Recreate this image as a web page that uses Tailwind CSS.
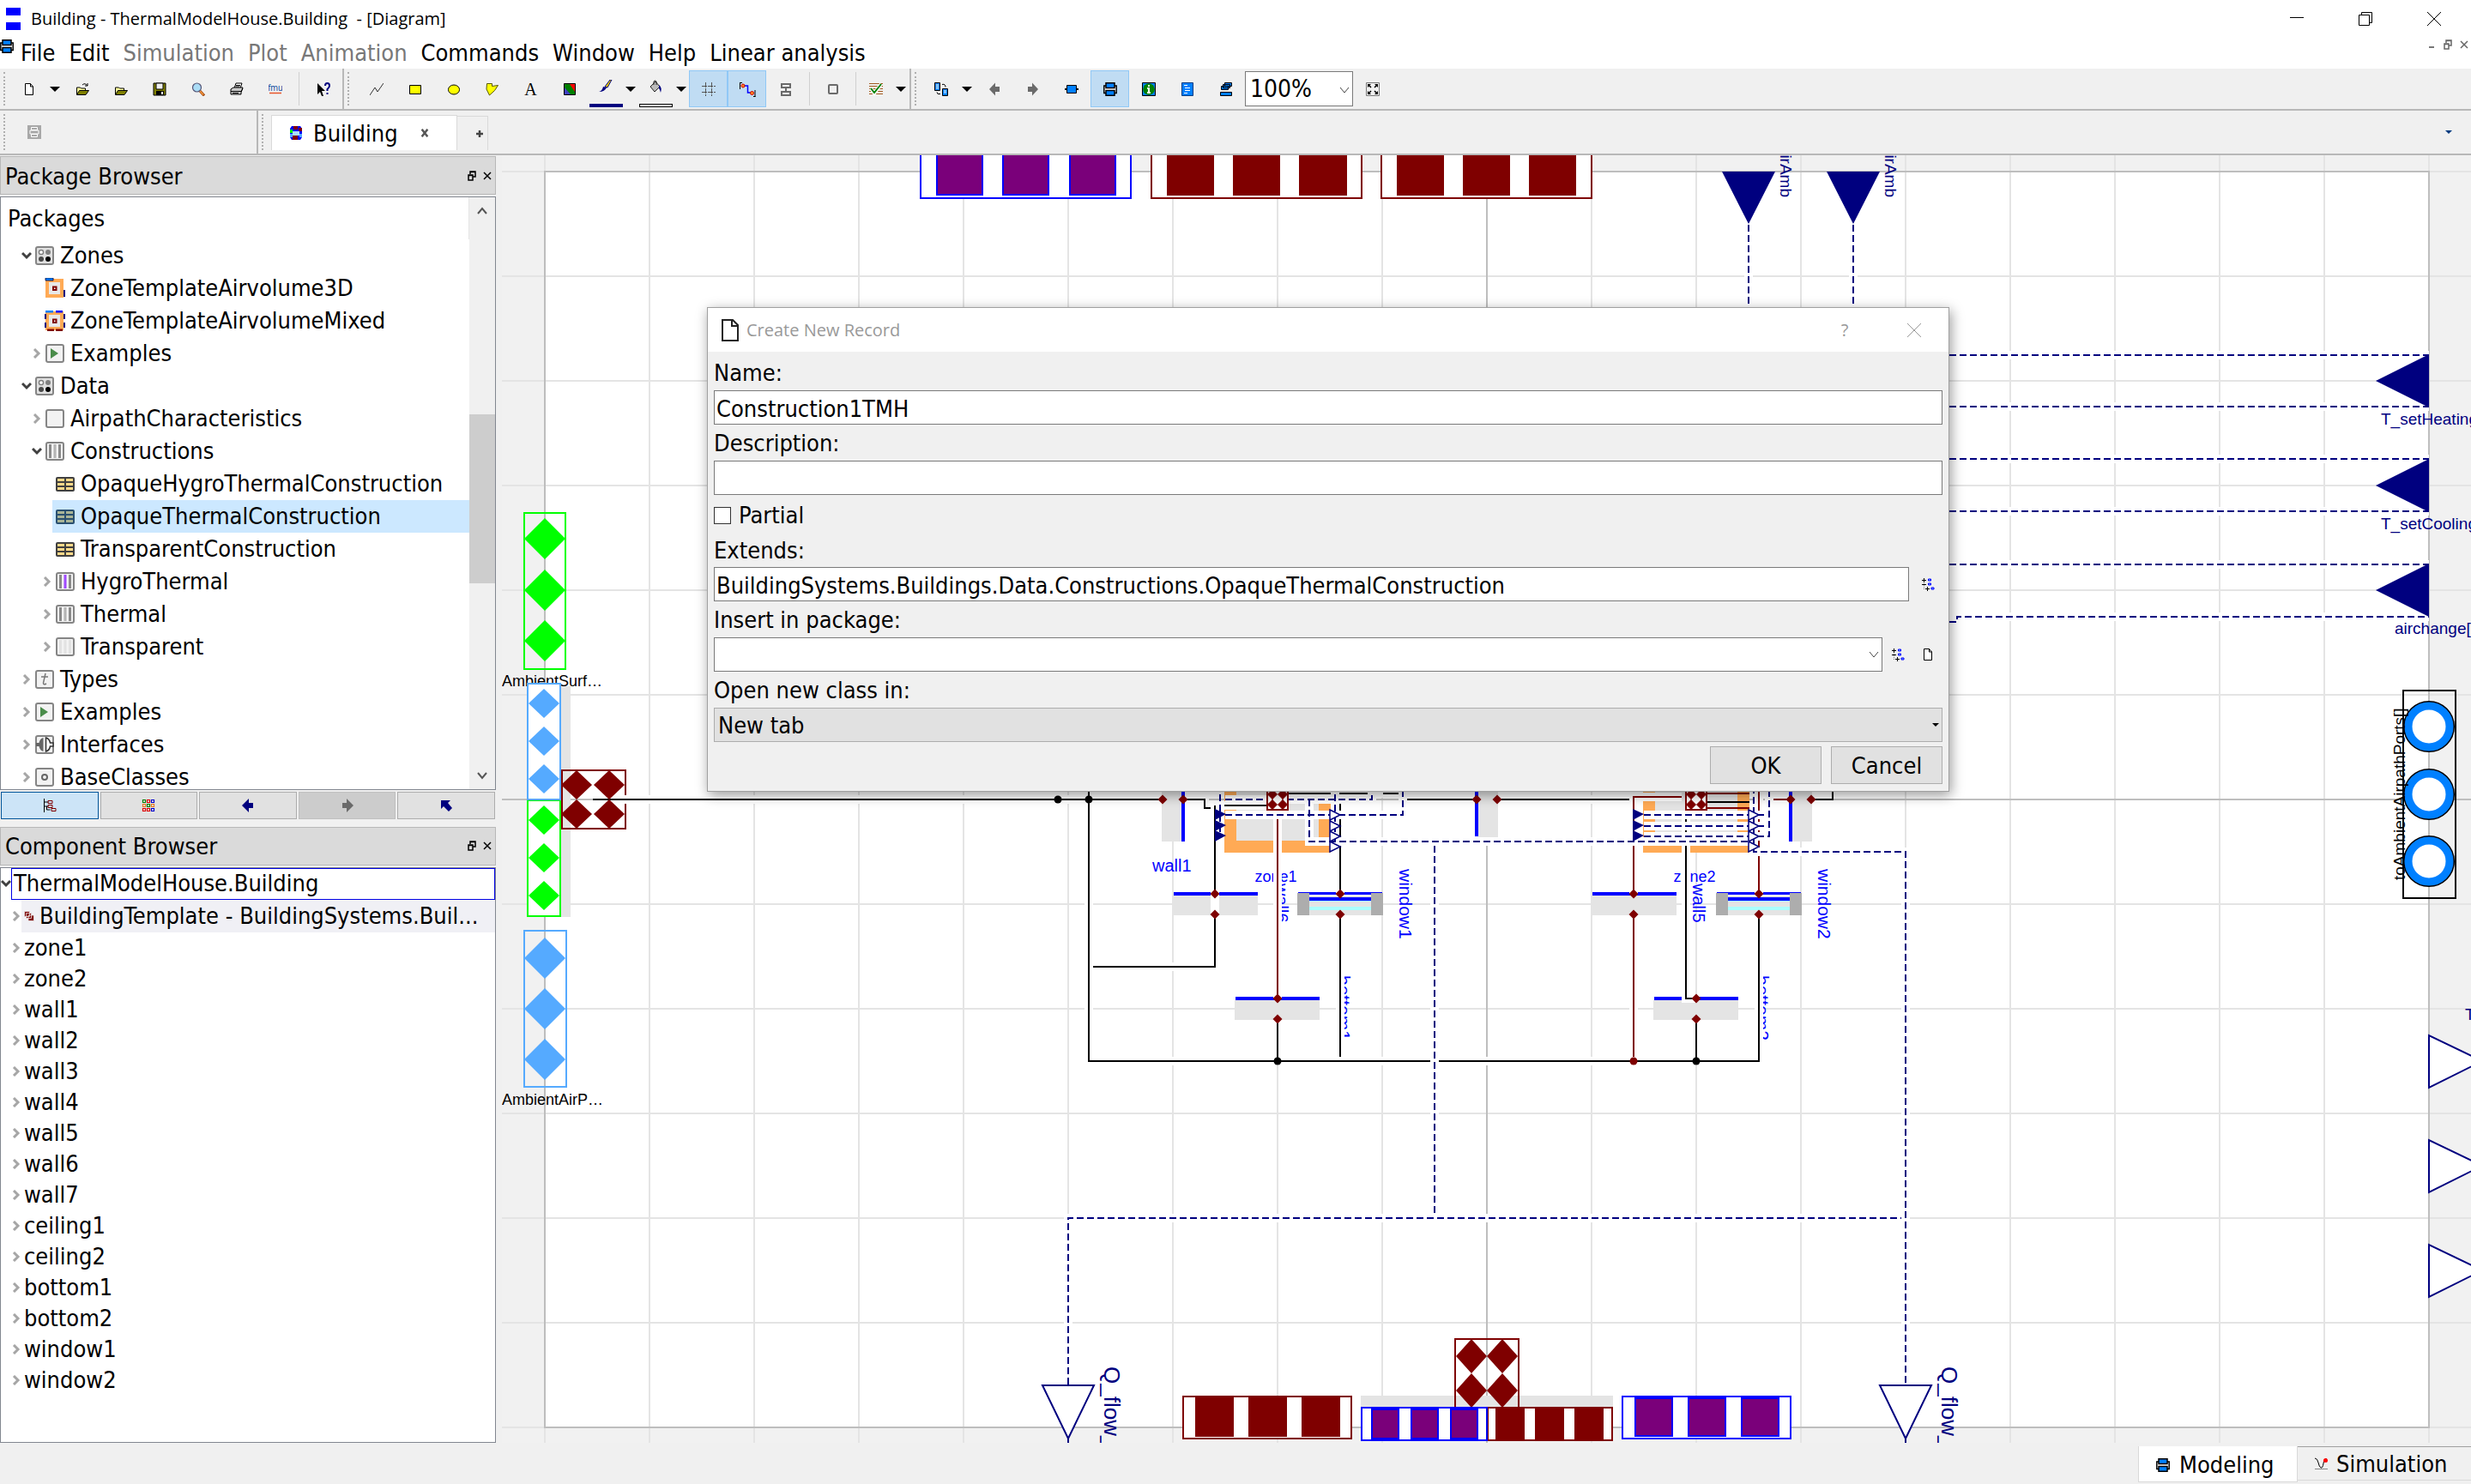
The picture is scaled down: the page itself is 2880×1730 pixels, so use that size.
<!DOCTYPE html>
<html lang="en">
<head>
<meta charset="utf-8">
<title>Building - ThermalModelHouse.Building - [Diagram]</title>
<script src="https://cdn.jsdelivr.net/npm/@tailwindcss/browser@4"></script>
</head>
<body class="bg-[#f0f0f0] text-black">
<svg class="hidden" aria-hidden="true">
  <symbol id="i-down" viewBox="0 0 12 12"><path d="M1 3l5 5 5-5" fill="none" stroke="#404040" stroke-width="3"/></symbol>
  <symbol id="i-right" viewBox="0 0 12 12"><path d="M3 1l5 5-5 5" fill="none" stroke="#a6a6a6" stroke-width="3"/></symbol>
  <symbol id="i-tri" viewBox="0 0 12 12"><path d="M0 3h12l-6 6z"/></symbol>
  <symbol id="i-page" viewBox="0 0 16 16"><path d="M3.500 1.500h6l3 3.500v9.500h-9z" fill="#fff" stroke="#000"/><path d="M9.500 1.500v3.500h3" fill="none" stroke="#000"/></symbol>
  <symbol id="i-diag" viewBox="0 0 16 16"><path d="M.8 4h14.400v8.500H.8z" fill="#fff" stroke="#000" stroke-width="1.500"/><path d="M3 .8h10v5.700H3zM3 9.500h10v5.700H3z" fill="#0080ff" stroke="#000" stroke-width="1.500"/></symbol>
  <symbol id="i-float" viewBox="0 0 10 12"><path d="M3 4V1h6v6H6M2.500 1.500h7M1 5h5v6H1zM1 5.500h5" fill="none" stroke="#000" stroke-width="1.500"/></symbol>
  <symbol id="i-x" viewBox="0 0 10 12"><path d="M1 2l8 8M9 2l-8 8" stroke="#000" stroke-width="1.500"/></symbol>
  <symbol id="i-treesel" viewBox="0 0 16 16"><path d="M3.500 1v14" stroke="#888" stroke-dasharray="1 1"/><path d="M1 3.500h5M3.500 1v5M1 8.500h5M5 13.500h5M7.500 11v5" stroke="#000"/><path d="M8.500 2h3v2h-3zM8.500 7h3v2h-3zM12 12h3v2h-3z" fill="#80b0ff" stroke="#00f"/></symbol>
  <symbol id="i-pack" viewBox="0 0 22 22"><rect x="1" y="1" width="20" height="20" rx="2" fill="#e0e0e0" stroke="#858585" stroke-width="2"/><circle cx="7" cy="7" r="2.600" fill="#fff" stroke="#808080" stroke-width="1.500"/><circle cx="15" cy="7" r="3" fill="#808080"/><circle cx="7" cy="15" r="3" fill="#4a4a4a"/><circle cx="15" cy="15" r="3" fill="#000"/></symbol>
  <symbol id="i-box" viewBox="0 0 22 22"><rect x="1" y="1" width="20" height="20" rx="2" fill="#f2f2f2" stroke="#858585" stroke-width="2"/></symbol>
  <symbol id="i-play" viewBox="0 0 22 22"><use href="#i-box"/><path d="M6 5l9 6-9 6z" fill="#4a8c4a"/></symbol>
  <symbol id="i-cons" viewBox="0 0 22 22"><use href="#i-box"/><path d="M4 3h3v16H4zM15 3h3v16h-3z" fill="#8a8a8a"/><path d="M9.500 3h3v16h-3z" fill="#b4b4b4"/></symbol>
  <symbol id="i-hygro" viewBox="0 0 22 22"><use href="#i-box"/><path d="M4 3h3v16H4zM15 3h3v16h-3z" fill="#8a8a8a"/><path d="M9.500 3h3v16h-3z" fill="#a04aff"/></symbol>
  <symbol id="i-transp" viewBox="0 0 22 22"><use href="#i-box"/><path d="M4 3h3v16H4zM9.500 3h3v16h-3zM15 3h3v16h-3z" fill="#e2e2e2"/></symbol>
  <symbol id="i-type" viewBox="0 0 22 22"><use href="#i-box"/><path d="M12 4l-2.500 11q0 3 3.500 1M7 8h8" fill="none" stroke="#777" stroke-width="1.500"/></symbol>
  <symbol id="i-base" viewBox="0 0 22 22"><use href="#i-box"/><circle cx="11" cy="11" r="3" fill="none" stroke="#666" stroke-width="2"/></symbol>
  <symbol id="i-iface" viewBox="0 0 22 22"><use href="#i-box"/><path d="M9.500 3v16q-4-1-5-6H1v-4h3.500q1-5 5-6z" fill="#666"/><path d="M12.500 3v16q4-1 5-6H21v-4h-3.500q-1-5-5-6z" fill="#fff" stroke="#333" stroke-width="1.500"/></symbol>
  <symbol id="i-z3d" viewBox="0 0 24 24"><path d="M3 3h17v18H3z" fill="#e8e8e8" stroke="#ffaa55" stroke-width="4"/><path d="M1 0h9v3H1z" fill="#0080ff" stroke="#003" stroke-width=".8"/><path d="M22 14h2v8h-2z" fill="#00007f"/><path d="M10 10.500h3.500v3.500H10z" fill="#fff" stroke="#7f0000" stroke-width="2"/></symbol>
  <symbol id="i-zmix" viewBox="0 0 24 24"><path d="M3 3h17v18H3z" fill="#e8e8e8" stroke="#ffaa55" stroke-width="4"/><path d="M1 0h9v2.500H1z" fill="#0080ff"/><path d="M13 0h8v2.500h-8z" fill="#00f"/><path d="M0 4h2v6H0zM0 14h2v6H0zM22 4h2v6h-2zM22 14h2v6h-2z" fill="#00007f"/><path d="M3 21.500h8V24H3zM13 21.500h8V24h-8z" fill="#7f0000"/><path d="M10 10.500h3.500v3.500H10z" fill="#fff" stroke="#7f0000" stroke-width="2"/></symbol>
  <symbol id="i-rec" viewBox="0 0 22 22"><rect y="3" width="22" height="17" rx="2" fill="#404040"/><path d="M2 5h8v3H2zM12 5h8v3h-8zM2 10h8v3H2zM12 10h8v3h-8zM2 15h8v3H2zM12 15h8v3h-8z" fill="#ffd98a"/></symbol>
  <symbol id="i-recsel" viewBox="0 0 22 22"><rect y="3" width="22" height="17" rx="2" fill="#2a5070"/><path d="M2 5h8v3H2zM12 5h8v3h-8zM2 10h8v3H2zM12 10h8v3h-8zM2 15h8v3H2zM12 15h8v3h-8z" fill="#a8b496"/></symbol>
  <symbol id="i-folder" viewBox="0 0 16 16"><path d="M1.500 14V6h4l1 1h5v2.500" fill="#ffff9c" stroke="#000"/><path d="M1.500 14.500l3-5h11l-3.500 5z" fill="#808000" stroke="#000"/></symbol>
</svg>

<div class="flex h-screen flex-col overflow-hidden font-['DejaVu_Sans_Condensed','DejaVu_Sans',sans-serif] text-[27px] leading-[36px]">

  <!-- Title bar -->
  <header class="flex h-[44px] shrink-0 items-center bg-white pl-[7px] font-['Open_Sans',sans-serif] text-[20px]">
    <svg class="h-[26px] w-[17px]" viewBox="0 0 17 26"><path d="M0 0h17v9H0zM0 17h17v9H0z" fill="#00f"/></svg>
    <h1 class="ml-3 flex-1 whitespace-pre">Building - ThermalModelHouse.Building  - [Diagram]</h1>
    <div class="flex">
      <button class="flex w-[80px] justify-center" aria-label="Minimize"><svg class="size-4" viewBox="0 0 16 16"><path d="M0 6.500h16" stroke="#000"/></svg></button>
      <button class="flex w-[80px] justify-center" aria-label="Restore"><svg class="size-4" viewBox="0 0 16 16"><path d="M.5 3.500h12v12H.5zM3.500 3V.5h12v12H13" fill="none" stroke="#000"/></svg></button>
      <button class="flex w-[80px] justify-center" aria-label="Close"><svg class="size-4" viewBox="0 0 16 16"><path d="M0 0l16 16M16 0L0 16" stroke="#000"/></svg></button>
      <span class="w-[3px]"></span>
    </div>
  </header>

  <!-- Menu bar -->
  <nav class="flex h-[36px] shrink-0 bg-white">
    <svg class="mt-0.5 h-4 w-4"><use href="#i-diag"/></svg>
    <div class="ml-[8px] flex flex-1 gap-4">
      <button>File</button><button>Edit</button><button class="text-[#787878]" disabled>Simulation</button><button class="text-[#787878]" disabled>Plot</button><button class="text-[#787878]" disabled>Animation</button><button>Commands</button><button>Window</button><button>Help</button><button>Linear analysis</button>
    </div>
    <div class="flex items-start gap-[9px] pt-0.5 pr-[3px]">
      <button class="flex" aria-label="Minimize document"><svg class="h-3 w-2.5" viewBox="0 0 10 12"><path d="M2 9h6" stroke="#777" stroke-width="2"/></svg></button>
      <button class="flex" aria-label="Restore document"><svg class="h-3 w-2.5 opacity-60"><use href="#i-float"/></svg></button>
      <button class="flex" aria-label="Close document"><svg class="h-3 w-2.5 opacity-60"><use href="#i-x"/></svg></button>
    </div>
  </nav>

  <!-- Tool bars -->
  <div class="flex h-[49px] shrink-0 items-stretch border-b-2 border-[#b8b8b8]">
    <span class="ml-1 my-1 w-0 border-l-2 border-dotted border-[#b0b0b0]"></span>
    <span class="w-2"></span>
    <button class="flex w-[40px] items-center justify-center" aria-label="New"><svg class="size-4"><use href="#i-page"/></svg></button>
    <button class="flex w-[19px] items-center justify-center" aria-label="New options"><svg class="size-3"><use href="#i-tri"/></svg></button>
    <button class="flex w-[45px] items-center justify-center" aria-label="Open"><svg class="size-4 overflow-visible" viewBox="0 0 16 16"><use href="#i-folder" width="16" height="16"/><path d="M8 3q3-3 6 1M14 1v3h-3" fill="none" stroke="#000"/></svg></button>
    <button class="flex w-[45px] items-center justify-center" aria-label="Load"><svg class="size-4"><use href="#i-folder"/></svg></button>
    <button class="flex w-[45px] items-center justify-center" aria-label="Save"><svg class="size-4" viewBox="0 0 16 16"><path d="M1 1h14v14H1z" fill="#808000" stroke="#000"/><path d="M4 1h8v7H4z" fill="#f0f0f0" stroke="#000"/><path d="M4 10h9v5H4z"/><path d="M10 11h2v3h-2z" fill="#fff"/></svg></button>
    <button class="flex w-[45px] items-center justify-center" aria-label="Find"><svg class="size-4" viewBox="0 0 16 16"><path d="M10 10l5 5.500" stroke="#a04a10" stroke-width="3"/><path d="M10 10l4 4.500" stroke="#ff9c40" stroke-width="1.300"/><circle cx="6.500" cy="6" r="5" fill="#aadcf5" stroke="#557" stroke-width="1.200"/></svg></button>
    <button class="flex w-[45px] items-center justify-center" aria-label="Print"><svg class="size-4" viewBox="0 0 16 16"><path d="M5 7L7 1h7l-2 6z" fill="#fff" stroke="#000"/><path d="M1 8l3-2h11l-2 6v2H1z" fill="#c8c8c8" stroke="#000"/><path d="M1 10.500h12l2-3M3 12.500h7M7 3.500h5M6.500 5h5" fill="none" stroke="#000"/></svg></button>
    <button class="flex w-[45px] items-center justify-center" aria-label="Import FMU"><svg class="size-4" viewBox="0 0 16 16"><text x="8" y="10" text-anchor="middle" font-size="10" fill="#0a4a9c">fmu</text><path d="M1 12.500h14" stroke="#e8552a" stroke-width="1.500"/></svg></button>
    <span class="mx-[5px] my-1 w-px bg-[#d0d0d0]"></span>
    <button class="flex w-[45px] items-center justify-center" aria-label="What's this"><svg class="size-4" viewBox="0 0 16 16"><path d="M1 1v13l3-3 2 5h2L6 10h4z"/><path d="M10 4q0-3 2.500-3T15 4q0 2-2.500 4v2M12.500 12v2" fill="none" stroke="#00007f" stroke-width="2"/></svg></button>
    <span class="w-0.5 bg-[#b8b8b8]"></span>
    <span class="ml-1 my-1 w-0 border-l-2 border-dotted border-[#b0b0b0]"></span>
    <span class="w-[9px]"></span>
    <button class="flex w-[45px] items-center justify-center" aria-label="Line"><svg class="size-4" viewBox="0 0 16 16"><path d="M0 15l6-9 3 5 7-10" fill="none" stroke="#333"/></svg></button>
    <button class="flex w-[45px] items-center justify-center" aria-label="Rectangle"><svg class="size-4" viewBox="0 0 16 16"><path d="M1.500 3.500h13v10h-13z" fill="#ff0" stroke="#000"/></svg></button>
    <button class="flex w-[45px] items-center justify-center" aria-label="Ellipse"><svg class="size-4" viewBox="0 0 16 16"><ellipse cx="8" cy="8.500" rx="6.500" ry="5.500" fill="#ff0" stroke="#000"/></svg></button>
    <button class="flex w-[45px] items-center justify-center" aria-label="Polygon"><svg class="size-4" viewBox="0 0 16 16"><path d="M1.500 1.500h6v3l7-1-4 6-6 5.500-3.500-7z" fill="#ff0" stroke="#555500"/></svg></button>
    <button class="flex w-[45px] items-center justify-center font-['Liberation_Serif',serif] text-[20px]" aria-label="Text">A</button>
    <button class="flex w-[45px] items-center justify-center" aria-label="Bitmap"><svg class="size-4" viewBox="0 0 16 16"><path d="M1.500 1.500h13v13h-13z" fill="#007f00" stroke="#000"/><path d="M8 2h6v9z" fill="#f00"/><path d="M2 6v8h7z" fill="#4040c0"/></svg></button>
    <button class="flex w-[40px] flex-col items-center justify-end pb-0.5" aria-label="Line colour"><svg class="mb-3 size-4" viewBox="0 0 16 16"><path d="M15 0l-5 9-3-1 6-8z" fill="#e6c800" stroke="#00007f"/><path d="M9 9q-2 5-9 5 4-1 5-6z" fill="#00007f"/></svg><span class="h-1 w-[39px] bg-[#00007f]"></span></button>
    <button class="flex w-[18px] items-center justify-center" aria-label="Line colour options"><svg class="size-3"><use href="#i-tri"/></svg></button>
    <button class="flex w-[40px] flex-col items-center justify-end pb-0.5" aria-label="Fill colour"><svg class="mb-3 size-4" viewBox="0 0 16 16"><path d="M2 8l6-6 5 6-6 6z" fill="#bbb" stroke="#222"/><path d="M6 6V2q1-2 3 0v4" fill="none" stroke="#222"/><path d="M12 6q4 3 2 9-1-4-2-5z" fill="#00007f"/></svg><span class="h-1 w-[39px] border border-black bg-white"></span></button>
    <button class="flex w-[19px] items-center justify-center" aria-label="Fill colour options"><svg class="size-3"><use href="#i-tri"/></svg></button>
    <button class="my-0.5 flex w-[45px] items-center justify-center border border-[#90c8f6] bg-[#c0dcf3]" aria-label="Grid" aria-pressed="true"><svg class="size-4" viewBox="0 0 16 16"><path d="M4.500 0v16M11.500 0v16M0 4.500h16M0 11.500h16" stroke="#555" stroke-dasharray="6 1"/></svg></button>
    <button class="my-0.5 flex w-[45px] items-center justify-center border border-[#90c8f6] bg-[#c0dcf3]" aria-label="Connect" aria-pressed="true"><svg class="size-4 overflow-visible" viewBox="0 0 16 16"><path d="M-.5 0v8M-1 .5h3M17 9v8M15 16.500h2.500" fill="none" stroke="#000"/><path d="M4 4h4.500v8H12" fill="none" stroke="#00f" stroke-width="1.500"/><circle cx="3" cy="4" r="2" fill="#ff8a20" stroke="#d00000"/><circle cx="13.500" cy="12.500" r="2" fill="#ff8a20" stroke="#d00000"/></svg></button>
    <button class="flex w-[45px] items-center justify-center" aria-label="Align"><svg class="size-4" viewBox="0 0 16 16"><path d="M3 2h10v4H3zM3 11h10v4H3zM8 6v5" fill="none" stroke="#6a6a6a" stroke-width="2"/></svg></button>
    <span class="mx-[5px] my-1 w-px bg-[#d0d0d0]"></span>
    <button class="flex w-[44px] items-center justify-center" aria-label="Component"><svg class="size-4" viewBox="0 0 16 16"><rect x="3" y="3" width="10" height="10" rx="1" fill="none" stroke="#6a6a6a" stroke-width="2"/></svg></button>
    <span class="mx-[4px] my-1 w-px bg-[#d0d0d0]"></span>
    <button class="flex w-[38px] items-center justify-center" aria-label="Check"><svg class="size-4" viewBox="0 0 16 16"><path d="M0 1.500h16M0 4.500h16M0 7.500h16M0 10.500h16M0 13.500h16" stroke="#a05a20"/><path d="M2 7l4 6 8-11" fill="none" stroke="#fff" stroke-width="4"/><path d="M2 7l4 5 8-10" fill="none" stroke="#008000" stroke-width="2"/></svg></button>
    <button class="flex w-[20px] items-center justify-center" aria-label="Check options"><svg class="size-3"><use href="#i-tri"/></svg></button>
    <span class="w-0.5 bg-[#b8b8b8]"></span>
    <span class="ml-1 my-1 w-0 border-l-2 border-dotted border-[#b0b0b0]"></span>
    <span class="w-[9px]"></span>
    <button class="flex w-[40px] items-center justify-center" aria-label="Show component"><svg class="size-4" viewBox="0 0 16 16"><path d="M.5.5h6v9h-6zM9.500 7.500h6v8h-6z" fill="#0080ff" stroke="#000"/><path d="M2 3h3M2 5h3M2 7h3M11 10h3M11 12h3" stroke="#fff"/><path d="M9 2.500q4-1 4 3M3 11.500q0 3 4 2" fill="none" stroke="#000"/></svg></button>
    <button class="flex w-[19px] items-center justify-center" aria-label="Show options"><svg class="size-3"><use href="#i-tri"/></svg></button>
    <button class="flex w-[45px] items-center justify-center" aria-label="Previous"><svg class="size-4" viewBox="0 0 16 16"><path d="M2 8l7-7.500V5h5v6H9v4.500z" fill="#6a6a6a"/></svg></button>
    <button class="flex w-[45px] items-center justify-center" aria-label="Next"><svg class="size-4" viewBox="0 0 16 16"><path d="M14 8L7 .5V5H2v6h5v4.500z" fill="#6a6a6a"/></svg></button>
    <button class="flex w-[45px] items-center justify-center" aria-label="Icon"><svg class="size-4" viewBox="0 0 16 16"><path d="M0 8h16" stroke="#000" stroke-width="2"/><path d="M2.500 3.500h11v9h-11z" fill="#0080ff" stroke="#000"/></svg></button>
    <button class="my-0.5 flex w-[45px] items-center justify-center border border-[#90c8f6] bg-[#c0dcf3]" aria-label="Diagram" aria-pressed="true"><svg class="size-4"><use href="#i-diag"/></svg></button>
    <button class="flex w-[45px] items-center justify-center" aria-label="Documentation"><svg class="size-4" viewBox="0 0 16 16"><path d="M.5.5h15v15H.5z" fill="#0080ff" stroke="#000"/><circle cx="8" cy="8" r="6.800" fill="#008000"/><path d="M8 3v2M6 7h2v5M6 12h4" fill="none" stroke="#fff" stroke-width="2"/></svg></button>
    <button class="flex w-[45px] items-center justify-center" aria-label="Modelica text"><svg class="size-4" viewBox="0 0 16 16"><path d="M1.500.5h13v15h-13z" fill="#0080ff" stroke="#003a80"/><path d="M4 3.500h4M5 6.500h6M5 9.500h6M4 12.500h4" stroke="#fff"/></svg></button>
    <button class="flex w-[45px] items-center justify-center" aria-label="Used classes"><svg class="size-4" viewBox="0 0 16 16"><path d="M6.500.5h8v4h-8zM4.500 2.500h8v4h-8zM2.500 4.500h8v4h-8zM1.500 11.500h13v4h-13z" fill="#0080ff" stroke="#000"/></svg></button>
    <div class="relative my-[3px]">
      <select aria-label="Zoom" class="h-full w-[126px] appearance-none border border-[#7a7a7a] bg-white pl-[5px] text-[28px]"><option>100%</option></select>
      <svg class="pointer-events-none absolute top-4 right-1 size-3" viewBox="0 0 12 12"><path d="M1 3l5 6 5-6" fill="none" stroke="#444"/></svg>
    </div>
    <button class="flex w-[45px] items-center justify-center" aria-label="Fit window"><svg class="size-4" viewBox="0 0 16 16"><path d="M.5.5h15v15H.5z" fill="none" stroke="#777"/><path d="M2 2h4L2 6zM14 2v4l-4-4zM2 14v-4l4 4zM14 14h-4l4-4z"/><path d="M3 3l3 3M13 3l-3 3M3 13l3-3M13 13l-3-3" stroke="#000" stroke-width="1.500"/></svg></button>
  </div>

  <div class="flex h-[52px] shrink-0 items-stretch border-b-2 border-[#b8b8b8]">
    <span class="ml-1 my-1 w-0 border-l-2 border-dotted border-[#b0b0b0]"></span>
    <div class="flex w-[293px] items-center pl-[26px]"><svg class="size-4" viewBox="0 0 16 16"><path d="M0 0h16v16H0z" fill="#a8a8a8"/><path d="M3 6h10M3 6v4h10V6M4.500 2.500h7v3h-7zM4.500 10.500h7v3h-7z" fill="none" stroke="#fff"/></svg></div>
    <span class="w-0.5 bg-[#b8b8b8]"></span>
    <span class="ml-1 my-1 w-0 border-l-2 border-dotted border-[#b0b0b0]"></span>
    <div class="ml-[9px] mt-[5px] mb-1 flex w-[217px] items-center border border-b-0 border-[#d9d9d9] bg-white pl-5" role="tab" aria-selected="true">
      <svg class="size-4" viewBox="0 0 16 16"><path d="M3 0h10l2 3v10l-2 3H3l-2-3V3z" fill="#00f"/><path d="M5 0h5v4H5zM11 2h4v4h-4zM4 11h6v5H4z" fill="#7f0000"/><path d="M1 4h3v4H1z" fill="#0f0"/><path d="M4 6h8v5H4z" fill="#aaddff"/><path d="M1 9h3v4H1zM12 9h3v4h-3z" fill="#5af"/></svg>
      <span class="ml-3 pt-0.5">Building</span>
      <button class="ml-auto mr-8 flex" aria-label="Close tab"><svg class="h-2.5 w-2.5" viewBox="0 0 10 12"><path d="M1 1l8 10M9 1L1 11" stroke="#555" stroke-width="3"/></svg></button>
    </div>
    <button class="mt-1.5 mb-1 flex w-[36px] items-center justify-center border-t border-r border-[#d9d9d9] pl-4" aria-label="New tab"><svg class="size-2.5" viewBox="0 0 10 10"><path d="M5 1v8M1 5h8" stroke="#444" stroke-width="2.500"/></svg></button>
    <span class="flex-1"></span>
    <button class="flex items-center pr-[21px]" aria-label="More tabs"><svg class="h-2 w-2.5" viewBox="0 0 12 12"><path d="M0 3h12l-6 6z" fill="#003a80"/></svg></button>
  </div>

  <main class="flex min-h-0 flex-1">
    <!-- Docked browsers -->
    <aside class="mr-[7px] flex w-[578px] shrink-0 flex-col pt-px">
      <div class="flex h-[45px] shrink-0 items-center border border-[#b8b8b8] bg-[#dadada] pr-1 pl-[5px]">
        <h2 class="flex-1 pt-0.5">Package Browser</h2>
        <button class="mr-2 flex" aria-label="Float"><svg class="h-3 w-2.5"><use href="#i-float"/></svg></button>
        <button class="flex" aria-label="Close"><svg class="h-3 w-2.5"><use href="#i-x"/></svg></button>
      </div>
      <div class="mt-0.5 flex min-h-0 flex-[692_1_0px] border border-[#828790] bg-white">
        <div class="min-w-0 flex-1 overflow-hidden whitespace-nowrap">
          <div class="flex h-[49px] items-center border-r border-[#e5e5e5] pt-px pl-2">Packages</div>
          <ul>
            <li class="flex h-[38px] items-center pl-6"><svg class="size-3"><use href="#i-down"/></svg><svg class="mr-[7px] ml-1 size-[22px]"><use href="#i-pack"/></svg>Zones</li>
            <li class="ml-[48px] flex h-[38px] items-center pl-[3px]"><svg class="mr-1.5 size-6"><use href="#i-z3d"/></svg>ZoneTemplateAirvolume3D</li>
            <li class="ml-[48px] flex h-[38px] items-center pl-[3px]"><svg class="mr-1.5 size-6"><use href="#i-zmix"/></svg>ZoneTemplateAirvolumeMixed</li>
            <li class="flex h-[38px] items-center pl-9"><svg class="size-3"><use href="#i-right"/></svg><svg class="mr-[7px] ml-1 size-[22px]"><use href="#i-play"/></svg>Examples</li>
            <li class="flex h-[38px] items-center pl-6"><svg class="size-3"><use href="#i-down"/></svg><svg class="mr-[7px] ml-1 size-[22px]"><use href="#i-pack"/></svg>Data</li>
            <li class="flex h-[38px] items-center pl-9"><svg class="size-3"><use href="#i-right"/></svg><svg class="mr-[7px] ml-1 size-[22px]"><use href="#i-box"/></svg>AirpathCharacteristics</li>
            <li class="flex h-[38px] items-center pl-9"><svg class="size-3"><use href="#i-down"/></svg><svg class="mr-[7px] ml-1 size-[22px]"><use href="#i-cons"/></svg>Constructions</li>
            <li class="ml-[60px] flex h-[38px] items-center pl-1"><svg class="mr-[7px] size-[22px]"><use href="#i-rec"/></svg>OpaqueHygroThermalConstruction</li>
            <li class="ml-[60px] flex h-[38px] items-center bg-[#cce8ff] pl-1"><svg class="mr-[7px] size-[22px]"><use href="#i-recsel"/></svg>OpaqueThermalConstruction</li>
            <li class="ml-[60px] flex h-[38px] items-center pl-1"><svg class="mr-[7px] size-[22px]"><use href="#i-rec"/></svg>TransparentConstruction</li>
            <li class="flex h-[38px] items-center pl-12"><svg class="size-3"><use href="#i-right"/></svg><svg class="mr-[7px] ml-1 size-[22px]"><use href="#i-hygro"/></svg>HygroThermal</li>
            <li class="flex h-[38px] items-center pl-12"><svg class="size-3"><use href="#i-right"/></svg><svg class="mr-[7px] ml-1 size-[22px]"><use href="#i-cons"/></svg>Thermal</li>
            <li class="flex h-[38px] items-center pl-12"><svg class="size-3"><use href="#i-right"/></svg><svg class="mr-[7px] ml-1 size-[22px]"><use href="#i-transp"/></svg>Transparent</li>
            <li class="flex h-[38px] items-center pl-6"><svg class="size-3"><use href="#i-right"/></svg><svg class="mr-[7px] ml-1 size-[22px]"><use href="#i-type"/></svg>Types</li>
            <li class="flex h-[38px] items-center pl-6"><svg class="size-3"><use href="#i-right"/></svg><svg class="mr-[7px] ml-1 size-[22px]"><use href="#i-play"/></svg>Examples</li>
            <li class="flex h-[38px] items-center pl-6"><svg class="size-3"><use href="#i-right"/></svg><svg class="mr-[7px] ml-1 size-[22px]"><use href="#i-iface"/></svg>Interfaces</li>
            <li class="flex h-[38px] items-center pl-6"><svg class="size-3"><use href="#i-right"/></svg><svg class="mr-[7px] ml-1 size-[22px]"><use href="#i-base"/></svg>BaseClasses</li>
          </ul>
        </div>
        <div class="flex w-[30px] flex-col items-center bg-[#f0f0f0] py-2.5">
          <svg class="size-3" viewBox="0 0 12 12"><path d="M1 9l5-6 5 6" fill="none" stroke="#555" stroke-width="2"/></svg>
          <div class="min-h-0 flex-[231_1_0px]"></div>
          <div class="min-h-0 w-full flex-[197_1_0px] bg-[#cdcdcd]"></div>
          <div class="min-h-0 flex-[218_1_0px]"></div>
          <svg class="size-3" viewBox="0 0 12 12"><path d="M1 3l5 6 5-6" fill="none" stroke="#555" stroke-width="2"/></svg>
        </div>
      </div>
      <div class="mx-px mt-0.5 grid h-[32px] shrink-0 grid-cols-5 gap-0.5">
        <button class="flex items-center justify-center border border-[#005499] bg-[#cce4f7]" aria-label="Tree view"><svg class="size-4" viewBox="0 0 16 16"><path d="M1.500 0v16M1.500 4h5M1.500 9h5M4.500 9v4h4" fill="none" stroke="#000"/><path d="M6 2.500h5v3H6zM6 7.500h5v3H6zM10 11.500h5v3h-5z" fill="none" stroke="#7f0000"/></svg></button>
        <button class="flex items-center justify-center border border-[#adadad] bg-[#e1e1e1]" aria-label="Icon view"><svg class="size-4" viewBox="0 0 16 16"><g fill="none" stroke-width="1.200"><path d="M1.500 1.500h3v3h-3zM6.500 6.500h3v3h-3z" stroke="#008000"/><path d="M6.500 1.500h3v3h-3zM1.500 11.500h3v3h-3zM6.500 11.500h3v3h-3z" stroke="#d00"/><path d="M11.500 1.500h3v3h-3zM11.500 11.500h3v3h-3z" stroke="#00c"/><path d="M1.500 6.500h3v3h-3zM11.500 6.500h3v3h-3z" stroke="#e87820"/></g></svg></button>
        <button class="flex items-center justify-center border border-[#adadad] bg-[#e1e1e1]" aria-label="Back"><svg class="size-4" viewBox="0 0 16 16"><path d="M1 8l8-8v5h5v6H9v5z" fill="#00007f"/></svg></button>
        <button class="flex items-center justify-center border border-[#bfbfbf] bg-[#ccc]" aria-label="Forward" disabled><svg class="size-4" viewBox="0 0 16 16"><path d="M15 8L7 0v5H2v6h5v5z" fill="#6a6a6a"/></svg></button>
        <button class="flex items-center justify-center border border-[#adadad] bg-[#e1e1e1]" aria-label="Go to parent"><svg class="size-4" viewBox="0 0 16 16"><path d="M2 2h11l-3 3 5 6-4 4-6-6-3 3z" fill="#00007f"/></svg></button>
      </div>
      <div class="mt-[9px] flex h-[45px] shrink-0 items-center border border-[#b8b8b8] bg-[#dadada] pr-1 pl-[5px]">
        <h2 class="flex-1 pt-0.5">Component Browser</h2>
        <button class="mr-2 flex" aria-label="Float"><svg class="h-3 w-2.5"><use href="#i-float"/></svg></button>
        <button class="flex" aria-label="Close"><svg class="h-3 w-2.5"><use href="#i-x"/></svg></button>
      </div>
      <ul class="mt-0.5 min-h-0 flex-[671_1_0px] overflow-hidden border border-[#828790] bg-white whitespace-nowrap">
        <li class="flex h-[37px] items-center"><svg class="size-3 shrink-0"><use href="#i-down"/></svg><span class="flex h-full flex-1 items-center border border-[#0000e6] pl-0.5">ThermalModelHouse.Building</span></li>
        <li class="flex h-[38px] items-center pl-[12px]"><svg class="size-3 shrink-0"><use href="#i-right"/></svg><span class="flex h-full flex-1 items-center bg-[#f0f0f5] pl-[3px]"><svg class="mr-1.5 h-3 w-3" viewBox="0 0 12 12"><path d="M.5.5h6v6h-6zM2.500 2.500h6v6h-6zM5 5h6.500v6.500H5z" fill="#7f0000" stroke="#e8e8e8" stroke-width=".8"/></svg>BuildingTemplate - BuildingSystems.Buil...</span></li>
        <li class="flex h-[36px] items-center gap-[3px] pl-[12px]"><svg class="size-3"><use href="#i-right"/></svg>zone1</li>
        <li class="flex h-[36px] items-center gap-[3px] pl-[12px]"><svg class="size-3"><use href="#i-right"/></svg>zone2</li>
        <li class="flex h-[36px] items-center gap-[3px] pl-[12px]"><svg class="size-3"><use href="#i-right"/></svg>wall1</li>
        <li class="flex h-[36px] items-center gap-[3px] pl-[12px]"><svg class="size-3"><use href="#i-right"/></svg>wall2</li>
        <li class="flex h-[36px] items-center gap-[3px] pl-[12px]"><svg class="size-3"><use href="#i-right"/></svg>wall3</li>
        <li class="flex h-[36px] items-center gap-[3px] pl-[12px]"><svg class="size-3"><use href="#i-right"/></svg>wall4</li>
        <li class="flex h-[36px] items-center gap-[3px] pl-[12px]"><svg class="size-3"><use href="#i-right"/></svg>wall5</li>
        <li class="flex h-[36px] items-center gap-[3px] pl-[12px]"><svg class="size-3"><use href="#i-right"/></svg>wall6</li>
        <li class="flex h-[36px] items-center gap-[3px] pl-[12px]"><svg class="size-3"><use href="#i-right"/></svg>wall7</li>
        <li class="flex h-[36px] items-center gap-[3px] pl-[12px]"><svg class="size-3"><use href="#i-right"/></svg>ceiling1</li>
        <li class="flex h-[36px] items-center gap-[3px] pl-[12px]"><svg class="size-3"><use href="#i-right"/></svg>ceiling2</li>
        <li class="flex h-[36px] items-center gap-[3px] pl-[12px]"><svg class="size-3"><use href="#i-right"/></svg>bottom1</li>
        <li class="flex h-[36px] items-center gap-[3px] pl-[12px]"><svg class="size-3"><use href="#i-right"/></svg>bottom2</li>
        <li class="flex h-[36px] items-center gap-[3px] pl-[12px]"><svg class="size-3"><use href="#i-right"/></svg>window1</li>
        <li class="flex h-[36px] items-center gap-[3px] pl-[12px]"><svg class="size-3"><use href="#i-right"/></svg>window2</li>
      </ul>
    </aside>

    <!-- Diagram canvas -->
    <section class="min-w-0 flex-1 overflow-hidden bg-[#f1f1f1] font-['Liberation_Sans',Arial,sans-serif]" aria-label="Diagram">
      <svg class="block h-full w-full" viewBox="585 181 2295 1501" preserveAspectRatio="xMidYMid slice" fill="none" stroke-width="2">
        <defs>
          <pattern id="grid" x="634" y="199" width="122" height="122" patternUnits="userSpaceOnUse"><path d="M0 1h122M1 0v122" stroke="#e4e4e4"/></pattern>
          <path id="d6" d="M-5.500 0L0-5.500 5.500 0 0 5.500z" fill="#7f0000"/>
          <path id="d18" d="M-18 0L0-17 18 0 0 17z"/>
          <path id="d24" d="M-24 0L0-24 24 0 0 24z"/>
          <g id="quad"><path d="M1 1h24v23H1z" fill="#fff" stroke="#7f0000"/><path d="M7 0v24M19 0v24" stroke="#7f0000" stroke-width="1"/><g stroke="#7f0000" stroke-width="1"><use href="#d6" x="7" y="6"/><use href="#d6" x="19" y="6"/><use href="#d6" x="7" y="18"/><use href="#d6" x="19" y="18"/></g></g>
          <g id="slab"><path d="M0 4h99v23H0z" fill="#e4e4e4"/><path d="M1 0h98v4H1z" fill="#00f"/></g>
          <g id="win"><path d="M13 4h74v23H13z" fill="#e4e4e4"/><path d="M1 0h98v3H1z" fill="#00f"/><path d="M13 6h74v4H13z" fill="#00f"/><path d="M13 10h74v1H13zM13 17h74v4H13z" fill="#aff"/><path d="M0 1h14v26H0zM86 1h14v26H86z" fill="#adadad"/></g>
          <g id="ins" fill="#00007f"><path d="M0 0l13 6-13 7zM0 13l13 6-13 7zM0 25l13 6-13 7z"/></g>
          <g id="outs" fill="#fff" stroke="#00007f" stroke-width="1.500"><path d="M0 1l12 6-12 6zM0 14l12 6-12 6zM0 26l12 6-12 6zM0 38l12 6-12 6z"/></g>
        </defs>
        <path d="M635 200h2196v1464H635z" fill="#fff"/>
        <path d="M585 181h2295v1501H585z" fill="url(#grid)"/>
        <path d="M635 200h2196v1464H635zM1733 200v1482M585 932h2295" stroke="#bebebe"/>

        <!-- heat and moisture ports, top edge -->
        <path d="M1073 170h245v61h-245z" fill="#fff" stroke="#00f"/>
        <path d="M1092 170h53v57h-53zM1169 170h53v57h-53zM1247 170h53v57h-53z" fill="#7a007a" stroke="#00f"/>
        <path d="M1342 170h245v61h-245zM1610 170h245v61h-245z" fill="#fff" stroke="#7f0000"/>
        <path d="M1360 170h55v58h-55zM1437 170h55v58h-55zM1514 170h56v58h-56zM1628 170h55v58h-55zM1705 170h55v58h-55zM1782 170h55v58h-55z" fill="#7f0000"/>

        <!-- surface and air ports, left edge -->
        <path d="M611 598h48v182h-48z" stroke="#0f0"/>
        <g fill="#0f0"><use href="#d24" x="635" y="628"/><use href="#d24" x="635" y="688"/><use href="#d24" x="635" y="747"/></g>
        <text x="702" y="800" text-anchor="end" font-size="18" fill="#000">AmbientSurf…</text>
        <path d="M653 800h12v269h-12z" fill="#e4e4e4"/>
        <path d="M615 933h38v135h-38z" fill="#fff" stroke="#0f0"/>
        <path d="M615 797h38v135h-38z" fill="#fff" stroke="#5af"/>
        <g fill="#5af"><use href="#d18" x="634" y="820"/><use href="#d18" x="634" y="864"/><use href="#d18" x="634" y="908"/></g>
        <g fill="#0f0"><use href="#d18" x="634" y="956"/><use href="#d18" x="634" y="1000"/><use href="#d18" x="634" y="1044"/></g>
        <path d="M611 1085h49v182h-49z" stroke="#5af"/>
        <g fill="#5af"><use href="#d24" x="635" y="1117"/><use href="#d24" x="635" y="1176"/><use href="#d24" x="635" y="1235"/></g>
        <text x="703" y="1288" text-anchor="end" font-size="18" fill="#000">AmbientAirP…</text>

        <!-- air ports, right edge -->
        <path d="M2801 805h61v242h-61z" stroke="#000"/>
        <g fill="#fff" stroke="#000" stroke-width="22"><circle cx="2831" cy="847" r="19"/><circle cx="2831" cy="926" r="19"/><circle cx="2831" cy="1004" r="19"/></g>
        <g fill="#fff" stroke="#0080ff" stroke-width="9"><circle cx="2831" cy="847" r="24"/><circle cx="2831" cy="926" r="24"/><circle cx="2831" cy="1004" r="24"/></g>
        <text transform="translate(2803 1026) rotate(-90)" font-size="19" fill="#000">toAmbientAirpathPorts[]</text>

        <!-- inputs -->
        <path d="M2260 414h571M2260 474h571M2260 535h571M2260 596h571M2260 658h571M2281 719h550M2038 262v120M2160 262v120" stroke="#fff" stroke-width="10"/>
        <path d="M2260 414h571M2260 474h571M2260 535h571M2260 596h571M2260 658h571M2260 725h21v-6h550M2038 262v120M2160 262v120" stroke="#00007f" stroke-dasharray="8 4"/>
        <path d="M2831 413v62l-62-31zM2831 535v62l-62-31zM2831 657v62l-62-31zM2007 200h62l-31 61zM2129 200h62l-31 61z" fill="#00007f"/>
        <g font-size="19" fill="#00007f"><text x="2775" y="495">T_setHeating</text><text x="2775" y="617">T_setCooling</text><text x="2791" y="739">airchange[]</text><text x="2873" y="1189">T</text>
        <text transform="translate(2075 230) rotate(90)" text-anchor="end">airAmb</text><text transform="translate(2197 230) rotate(90)" text-anchor="end">airAmb</text></g>
        <path d="M2831 1207v61l62-31zM2831 1329v61l62-31zM2831 1451v61l62-31z" fill="#fff" stroke="#00007f"/>

        <!-- ambient heat port bus -->
        <path d="M655 898h74v68h-74z" stroke="#7f0000"/>
        <path d="M725 932h650M1269 920v317h781" stroke="#fff" stroke-width="10"/>
        <path d="M691 932h670" stroke="#000"/>
        <g fill="#7f0000"><use href="#d18" x="672" y="915"/><use href="#d18" x="710" y="915"/><use href="#d18" x="672" y="949"/><use href="#d18" x="710" y="949"/></g>

        <!-- wall bodies -->
        <path d="M1354 900h26v81h-26zM1723 900h23v76h-23zM2089 900h23v81h-23z" fill="#e4e4e4"/>
        <path d="M1377 900h4v81h-4zM1719 900h4v75h-4zM2085 900h4v81h-4z" fill="#00f"/>
        <use href="#slab" x="1367" y="1040"/><use href="#slab" x="1439" y="1162"/><use href="#slab" x="1855" y="1040"/><use href="#slab" x="1927" y="1162"/>
        <use href="#win" x="1512" y="1040"/><use href="#win" x="2000" y="1040"/>

        <!-- zones -->
        <path d="M1434 900v87h110v-87M1922 900v87h110v-87" fill="#e4e4e4" stroke="#ffaa55" stroke-width="14"/>

        <!-- component names -->
        <g fill="#00f" font-size="20"><text x="1343" y="1016">wall1</text>
        <text x="1487" y="1028" text-anchor="middle" font-size="18">zone1</text><text x="1975" y="1028" text-anchor="middle" font-size="18">zone2</text>
        <text transform="translate(1487 1030) rotate(90)">wall6</text><text transform="translate(1973 1030) rotate(90)">wall5</text></g>
        <g fill="#00f" font-size="21"><text transform="translate(1631 1013) rotate(90)">window1</text><text transform="translate(2119 1013) rotate(90)">window2</text>
        <text transform="translate(1559 1137) rotate(90)">bottom1</text><text transform="translate(2047 1137) rotate(90)">bottom2</text></g>

        <!-- connections -->
        <path d="M1381 932h23v10h12M1427 939h50M1502 925h132M1416 942v185h-142M1562 937v105M1562 1066v166M1489 1188v49M1640 932h79M1746 932h153M1977 1188v49M2050 1066v171" stroke="#fff" stroke-width="10"/>
        <path d="M1381 932h23v10h7M1427 939h50M1502 925h49M1561 925h33M1612 925h18M1416 939v103M1416 1066v61h-142M1562 937v105M1562 1066v166M1489 1188v49M1640 932h79M1746 932h153M1269 920v317h398M1677 1237h373v-171M1977 1188v49M2112 932h24v-15" stroke="#000"/>
        <path d="M1428 932h171v-12M1428 950h207v-30M1526 932v49h512M1672 986v434" stroke="#fff" stroke-width="10"/>
        <path d="M1489 955v209" stroke="#fff" stroke-width="10"/><path d="M1489 955v209" stroke="#7f0000"/>
        <path d="M1904 1042v-113h56M2050 917v125M1904 1066v166" stroke="#fff" stroke-width="10"/>
        <path d="M1904 1042v-113h56M2050 917v125M1904 1066v166M1977 925h62M1977 942h62M2067 932h20" stroke="#7f0000"/>
        <path d="M1977 935h62" stroke="#000"/>
        <path d="M1965 955v209h12" stroke="#fff" stroke-width="10"/><path d="M1965 955v209h12" stroke="#000"/>
        <path d="M1916 950h141M1916 963h141M1916 975h146v-58M1526 981h512M2048 993h173v621" stroke="#fff" stroke-width="10"/>
        <path d="M1428 932h171v-12M1428 950h207v-30M1422 926v50M1556 926v60M1526 932v49h512M1672 986v434M1916 950h141M1916 963h141M1916 975h146v-58M2044 917v76h177v621" stroke="#00007f" stroke-dasharray="8 4"/>
        <path d="M1245 1614v-194h971" stroke="#fff" stroke-width="10"/><path d="M1245 1614v-194h971" stroke="#00007f" stroke-dasharray="8 4"/>
        <use href="#quad" x="1476" y="920"/><use href="#quad" x="1964" y="920"/>
        <use href="#ins" x="1416" y="943"/><use href="#ins" x="1903" y="943"/>
        <use href="#outs" x="1550" y="943"/><use href="#outs" x="2038" y="943"/>
        <g fill="#000"><circle cx="1233" cy="932" r="4.500"/><circle cx="1269" cy="932" r="4.500"/><circle cx="1489" cy="1237" r="4.500"/><circle cx="1977" cy="1237" r="4.500"/><circle cx="1904" cy="1237" r="4.500" fill="#7f0000"/></g>
        <use href="#d6" x="1355" y="932"/><use href="#d6" x="1379" y="932"/><use href="#d6" x="1721" y="932"/><use href="#d6" x="1745" y="932"/><use href="#d6" x="2087" y="932"/><use href="#d6" x="2111" y="932"/>
        <use href="#d6" x="1416" y="1042"/><use href="#d6" x="1416" y="1066"/><use href="#d6" x="1562" y="1042"/><use href="#d6" x="1562" y="1066"/><use href="#d6" x="1489" y="1164"/><use href="#d6" x="1489" y="1188"/>
        <use href="#d6" x="1904" y="1042"/><use href="#d6" x="1904" y="1066"/><use href="#d6" x="2050" y="1042"/><use href="#d6" x="2050" y="1066"/><use href="#d6" x="1977" y="1164"/><use href="#d6" x="1977" y="1188"/>

        <!-- bottom edge ports -->
        <path d="M1215 1615h60l-30 62zM2191 1615h60l-30 62z" fill="#fff" stroke="#00007f"/>
        <path d="M1245 1677v6M2221 1677v6" stroke="#00007f"/>
        <g font-size="26" fill="#00007f"><text transform="translate(1287 1593) rotate(90)">Q_flow_</text><text transform="translate(2263 1593) rotate(90)">Q_flow_</text></g>
        <path d="M1379 1628h196v49h-196z" fill="#fff" stroke="#7f0000"/>
        <path d="M1393 1628h45v47h-45zM1455 1628h45v47h-45zM1517 1628h45v47h-45z" fill="#7f0000"/>
        <path d="M1891 1628h196v49h-196z" fill="#fff" stroke="#00f"/>
        <path d="M1906 1630h43v44h-43zM1968 1630h43v44h-43zM2030 1630h43v44h-43z" fill="#7a007a" stroke="#00f"/>
        <path d="M1586 1627h294v13h-294z" fill="#e4e4e4"/>
        <path d="M1696 1561h74v80h-74z" stroke="#7f0000"/>
        <path d="M1715 1561l18 20-18 20-18-20zM1751 1561l18 20-18 20-18-20zM1715 1601l18 20-18 20-18-20zM1751 1601l18 20-18 20-18-20z" fill="#7f0000"/>
        <path d="M1734 1641h145v38h-145z" fill="#fff" stroke="#7f0000"/>
        <path d="M1743 1641h34v37h-34zM1789 1641h34v37h-34zM1835 1641h34v37h-34z" fill="#7f0000"/>
        <path d="M1587 1641h146v38h-146z" fill="#fff" stroke="#00f"/>
        <path d="M1599 1643h31v34h-31zM1645 1643h31v34h-31zM1691 1643h31v34h-31z" fill="#7a007a" stroke="#00f"/>
      </svg>
    </section>
  </main>

  <!-- Mode tabs -->
  <footer class="flex h-[48px] shrink-0 items-start justify-end pt-1">
    <button class="flex h-[42px] w-[186px] items-center border border-t-0 border-[#d9d9d9] bg-white pt-0.5 pl-5"><svg class="mr-[11px] size-4"><use href="#i-diag"/></svg>Modeling</button>
    <button class="flex h-[40px] w-[202px] items-center border-t border-b border-t-[#a0a0a0] border-b-[#d9d9d9] pt-0.5 pl-5"><svg class="mr-[9px] size-4" viewBox="0 0 16 16"><path d="M0 13.500h15" stroke="#888"/><path d="M0 1q3 0 4 5t3 6 3-5 4-5" fill="none" stroke="#000"/><circle cx="12.500" cy="3.500" r="2.500" fill="#f00"/></svg>Simulation</button>
  </footer>
</div>

<!-- Create New Record dialog -->
<form role="dialog" aria-labelledby="dlg-title" class="absolute top-[358px] left-[824px] w-[1448px] border border-[#a0a0a0] bg-[#f0f0f0] font-['DejaVu_Sans_Condensed','DejaVu_Sans',sans-serif] text-[27px] leading-[36px] shadow-[2px_4px_14px_rgba(0,0,0,0.4)]">
  <div class="flex h-[51px] items-center bg-white pl-[15px] font-['Open_Sans',sans-serif] text-[20px] text-[#999]">
    <svg class="h-[28px] w-[22px]" viewBox="0 0 22 28"><path d="M2 2h12l6 6v18H2z" fill="#fff" stroke="#222" stroke-width="2"/><path d="M13 1v8h7" fill="none" stroke="#222" stroke-width="2"/></svg>
    <h2 id="dlg-title" class="ml-2 flex-1">Create New Record</h2>
    <button type="button" class="w-[80px]" aria-label="Help">?</button>
    <button type="button" class="flex w-[81px] justify-center" aria-label="Close"><svg class="size-4" viewBox="0 0 16 16"><path d="M0 0l16 16M16 0L0 16" stroke="#999"/></svg></button>
  </div>
  <div class="px-[7px] pt-[3px] pb-2">
    <label for="f-name" class="flex h-[42px] items-center pt-0.5">Name:</label>
    <input id="f-name" type="text" value="Construction1TMH" class="block h-[40px] w-full border border-[#7a7a7a] bg-white px-0.5 pt-0.5">
    <label for="f-desc" class="flex h-[42px] items-center pt-0.5">Description:</label>
    <input id="f-desc" type="text" class="block h-[40px] w-full border border-[#7a7a7a] bg-white px-0.5 pt-0.5">
    <div class="flex h-[45px] items-center gap-[9px] pt-0.5"><input id="f-partial" type="checkbox" class="size-5 appearance-none border border-[#333] bg-white"><label for="f-partial">Partial</label></div>
    <label for="f-ext" class="flex h-[39px] items-center">Extends:</label>
    <div class="flex items-center">
      <input id="f-ext" type="text" value="BuildingSystems.Buildings.Data.Constructions.OpaqueThermalConstruction" class="h-[40px] flex-1 border border-[#7a7a7a] bg-white px-0.5 pt-0.5">
      <button type="button" class="flex w-[39px] justify-center pl-1" aria-label="Select base class"><svg class="size-4"><use href="#i-treesel"/></svg></button>
    </div>
    <label for="f-pkg" class="flex h-[42px] items-center pt-0.5">Insert in package:</label>
    <div class="flex items-center">
      <div class="relative flex-1">
        <select id="f-pkg" class="block h-[40px] w-full appearance-none border border-[#7a7a7a] bg-white px-1"><option></option></select>
        <svg class="pointer-events-none absolute top-3.5 right-1 size-3" viewBox="0 0 12 12"><path d="M1 3l5 6 5-6" fill="none" stroke="#444"/></svg>
      </div>
      <button type="button" class="flex w-[35px] justify-center" aria-label="Select package"><svg class="size-4"><use href="#i-treesel"/></svg></button>
      <button type="button" class="flex w-[35px] justify-center" aria-label="New package"><svg class="size-4"><use href="#i-page"/></svg></button>
    </div>
    <label for="f-open" class="flex h-[42px] items-center pt-0.5">Open new class in:</label>
    <div class="relative">
      <select id="f-open" class="block h-[40px] w-full appearance-none border border-[#adadad] bg-[#e1e1e1] px-1 pt-0.5"><option>New tab</option></select>
      <svg class="pointer-events-none absolute top-4 right-1 size-2"><use href="#i-tri"/></svg>
    </div>
    <div class="mt-[5px] flex justify-end gap-[11px]">
      <button type="button" class="h-[44px] w-[130px] border border-[#adadad] bg-[#e1e1e1] pt-0.5">OK</button>
      <button type="button" class="h-[44px] w-[130px] border border-[#adadad] bg-[#e1e1e1] pt-0.5">Cancel</button>
    </div>
  </div>
</form>
</body>
</html>
</script>
